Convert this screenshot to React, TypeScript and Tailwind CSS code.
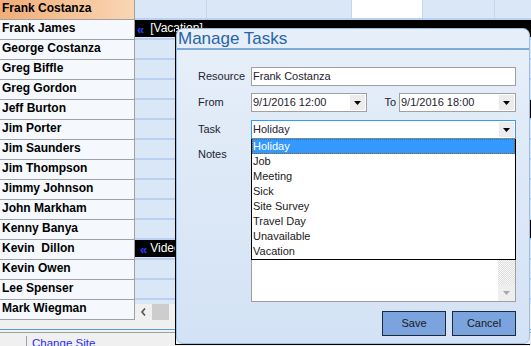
import React from 'react'

const people = [
  'Frank Costanza',
  'Frank James',
  'George Costanza',
  'Greg Biffle',
  'Greg Gordon',
  'Jeff Burton',
  'Jim Porter',
  'Jim Saunders',
  'Jim Thompson',
  'Jimmy Johnson',
  'John Markham',
  'Kenny Banya',
  'Kevin  Dillon',
  'Kevin Owen',
  'Lee Spenser',
  'Mark Wiegman',
]

const taskTypes = ['Holiday', 'Job', 'Meeting', 'Sick', 'Site Survey', 'Travel Day', 'Unavailable', 'Vacation']

function Caret({ color = '#000000' }: { color?: string }) {
  return (
    <svg width="7" height="4" viewBox="0 0 7 4">
      <polygon points="0,0 7,0 3.5,4" fill={color} />
    </svg>
  )
}

function Combo({ value, focused }: { value: string; focused?: boolean }) {
  return (
    <div
      className={`flex h-[19px] w-full bg-white border ${focused ? 'border-[#3399ff]' : 'border-[#a0a0a0]'}`}
    >
      <div className="flex-1 pl-[1px] leading-[17px] whitespace-nowrap overflow-hidden">{value}</div>
      <div className="w-[15px] h-[15px] my-[1px] mr-[1px] bg-[#ececec] flex items-center justify-center">
        <Caret />
      </div>
    </div>
  )
}

function EventBar({ label, className }: { label: string; className: string }) {
  return (
    <div className={`h-[17px] bg-black flex items-center text-[12px] whitespace-nowrap overflow-hidden ${className}`}>
      <span className="text-[#2a3cff] font-bold text-[13px] leading-[17px] mt-[2px]">«</span>
      <span className="text-white leading-[17px]">{label}</span>
    </div>
  )
}

export default function App() {
  return (
    <div className="relative w-[531px] h-[346px] overflow-hidden bg-[#f0f0f0] font-['Liberation_Sans',Arial,sans-serif] text-[#1a1a1a]">
      {/* resources + timeline */}
      <div className="flex h-[320px]">
        <div className="w-[135px] border-r border-[#a0a0a0] flex flex-col">
          {people.map((name, i) => (
            <div
              key={name}
              className={`h-[20px] shrink-0 border-b border-[#a0a0a0] pl-[2px] text-[12px] font-bold leading-[17px] whitespace-pre text-black ${
                i === 0 ? 'bg-linear-to-r from-[#f0ad77] to-[#f9d6b4]' : 'bg-[#f5f8fd]'
              }`}
            >
              {name}
            </div>
          ))}
        </div>

        <div className="flex-1 flex flex-col bg-[#dae7f7]">
          {/* first row has day columns */}
          <div className="h-[20px] shrink-0 flex border-b-2 border-[#b9d0f0]">
            <div className="w-[72px] border-r border-[#c6d6ec]" />
            <div className="w-[145px] border-r border-[#c6d6ec]" />
            <div className="w-[71px] border-r border-[#c6d6ec] bg-white" />
            <div className="w-[72px] border-r border-[#c6d6ec]" />
            <div className="flex-1" />
          </div>
          {people.slice(1, 15).map((name, idx) => {
            const i = idx + 1
            return (
              <div key={name} className="h-[20px] shrink-0 flex border-b-2 border-[#b9d0f0]">
                {i === 1 && <EventBar label="[Vacation]" className="flex-1 pl-[2px] gap-[6px]" />}
                {i === 12 && <EventBar label="Video" className="w-[220px] pl-[5px] gap-[3px]" />}
                {(i === 5 || i === 11) && <div className="ml-auto w-[40px] h-[18px] bg-black" />}
              </div>
            )
          })}
          <div className="flex-1" />
          <div className="h-[16px] shrink-0 bg-[#f0f0f0] flex items-center">
            <svg width="5" height="8" viewBox="0 0 5 8" className="ml-[6px]">
              <polyline points="4,0.5 1,4 4,7.5" fill="none" stroke="#505050" strokeWidth="1.6" />
            </svg>
            <div className="ml-[6px] w-[17px] h-full bg-[#cdcdcd]" />
          </div>
        </div>
      </div>

      {/* status strip */}
      <div className="h-[26px] pt-[9px]">
        <div className="h-px bg-[#5c9ddf]" />
        <div className="h-px mt-[2px] bg-[#a0a0a0]" />
        <div className="flex mt-[3px]">
          <div className="w-[26px]" />
          <div className="h-[10px] border-l border-[#a0a0a0]" />
          <span className="pl-[5px] text-[11.5px] leading-[14px] text-[#2c2cf0] underline">Change Site</span>
        </div>
      </div>

      {/* Manage Tasks dialog */}
      <div className="absolute left-[175px] top-[28px] w-[355px] h-[317px] border-l border-b border-black flex">
        <div className="flex-1 flex flex-col rounded-[7px] border border-[#9ebde4] bg-linear-to-b from-[#e7eff9] to-[#d3e2f5] text-[11px]">
          <div className="h-[19px] pl-[1px] text-[17px] leading-[19px] text-[#2665a8]">Manage Tasks</div>
          <div className="h-[2px] bg-[#7eaad8]" />

          <div className="flex flex-col pl-[21px] pr-[13px] text-[#1e2330]">
            <div className="flex items-center mt-[17px] h-[19px]">
              <div className="w-[53px]">Resource</div>
              <div className="flex-1 h-[19px] bg-white border border-[#a0a0a0] pl-[1px] leading-[17px]">
                Frank Costanza
              </div>
            </div>

            <div className="flex items-center mt-[7px] h-[19px]">
              <div className="w-[53px]">From</div>
              <div className="w-[116px]">
                <Combo value="9/1/2016 12:00" />
              </div>
              <div className="flex-1 flex items-center justify-end gap-[3px]">
                <span>To</span>
                <div className="w-[117px]">
                  <Combo value="9/1/2016 18:00" />
                </div>
              </div>
            </div>

            <div className="flex items-center mt-[8px] h-[19px]">
              <div className="w-[53px]">Task</div>
              <div className="flex-1 relative">
                <Combo value="Holiday" focused />
                <div className="absolute left-0 right-0 top-[19px] z-10 bg-white border-x border-b border-black flex flex-col">
                  {taskTypes.map((t, i) => (
                    <div
                      key={t}
                      className={`h-[15px] leading-[13px] border ${
                        i === 0
                          ? 'bg-[#3399ff] text-white border-dotted border-[#a85a00]'
                          : 'border-transparent text-[#1a1a1a]'
                      }`}
                    >
                      {t}
                    </div>
                  ))}
                </div>
              </div>
            </div>

            <div className="flex items-start mt-[8px] h-[155px]">
              <div className="w-[53px] pt-[1px] leading-[13px]">Notes</div>
              <div className="flex-1 h-full bg-white border border-[#a0a0a0] flex justify-end">
                <div className="w-[17px] h-full flex flex-col">
                  <div className="flex-1 bg-[repeating-conic-gradient(#dedede_0%_25%,#f8f8f8_0%_50%)] bg-[length:2px_2px]" />
                  <div className="h-[16px] bg-[#eeeeee] flex items-center justify-center">
                    <Caret color="#a8a8a8" />
                  </div>
                </div>
              </div>
            </div>

            <div className="flex justify-end gap-[6px] mt-[9px]">
              <button className="w-[64px] h-[25px] border border-[#1c2a40] bg-[#7ba3dd] text-[#1a1a1a]">Save</button>
              <button className="w-[64px] h-[25px] border border-[#1c2a40] bg-[#7ba3dd] text-[#1a1a1a]">Cancel</button>
            </div>
          </div>
        </div>
      </div>
    </div>
  )
}
